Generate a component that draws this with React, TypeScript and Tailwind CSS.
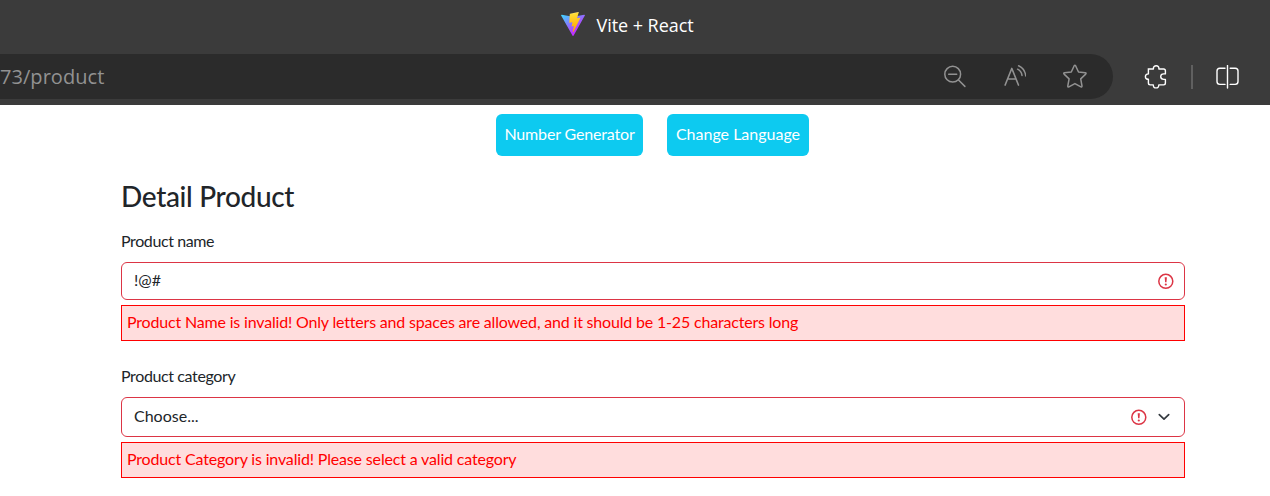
import type { ReactNode } from "react";

function ViteLogo() {
  return (
    <svg className="h-6 w-6" viewBox="0 0 256 257" aria-hidden="true">
      <defs>
        <linearGradient id="shield" x1="-.8%" x2="57.6%" y1="7.7%" y2="78.4%">
          <stop offset="0%" stopColor="#41D1FF" />
          <stop offset="100%" stopColor="#BD34FE" />
        </linearGradient>
        <linearGradient id="bolt" x1="43.4%" x2="50.3%" y1="2.2%" y2="89%">
          <stop offset="0%" stopColor="#FFEA83" />
          <stop offset="8.3%" stopColor="#FFDD35" />
          <stop offset="100%" stopColor="#FFA800" />
        </linearGradient>
      </defs>
      <path fill="url(#shield)" d="M255.153 37.938L134.897 252.976c-2.483 4.44-8.862 4.466-11.382.048L.875 37.958c-2.746-4.814 1.371-10.646 6.827-9.67l120.385 21.517a6.537 6.537 0 0 0 2.322-.004l117.867-21.483c5.438-.991 9.574 4.796 6.877 9.62Z" />
      <path fill="url(#bolt)" d="M185.432.063L96.44 17.501a3.268 3.268 0 0 0-2.634 3.014l-5.474 92.456a3.268 3.268 0 0 0 3.997 3.378l24.777-5.718c2.318-.535 4.413 1.507 3.936 3.838l-7.361 36.047c-.495 2.426 1.782 4.5 4.151 3.78l15.304-4.649c2.372-.72 4.652 1.36 4.15 3.788l-11.698 56.621c-.732 3.542 3.979 5.473 5.943 2.437l1.313-2.028l72.516-144.72c1.215-2.423-.88-5.186-3.54-4.672l-25.505 4.922c-2.396.462-4.435-1.77-3.759-4.114l16.646-57.705c.677-2.35-1.37-4.583-3.769-4.113Z" />
    </svg>
  );
}

function ErrorIcon() {
  return (
    <svg className="h-[17px] w-[17px]" viewBox="0 0 17 17" fill="none" stroke="#dc3545" aria-hidden="true">
      <circle cx="8.8" cy="8.3" r="7" strokeWidth="1.5" />
      <path d="M7.7 4.2h2.2l-.4 5.1H8.1z" fill="#dc3545" stroke="none" />
      <circle cx="8.8" cy="11.5" r="1.1" fill="#dc3545" stroke="none" />
    </svg>
  );
}

function BrowserChrome() {
  return (
    <header className="h-[105px] bg-[#3b3b3b]">
      <div className="flex h-[54px] items-center pb-[6px] pl-[560.5px]">
        <ViteLogo />
        <span className="ml-3 whitespace-nowrap pt-[2px] font-['Open_Sans',sans-serif] text-[18px] leading-6 tracking-[-0.05px] text-white">Vite + React</span>
      </div>
      <div className="flex h-[45px] items-center">
        <div className="flex h-[45px] w-[1113px] items-center rounded-r-full bg-[#2b2b2b] text-[#929292]">
          <span className="flex-1 font-['Open_Sans',sans-serif] text-[20px] leading-6 tracking-[0.05px]">73/product</span>
          <svg className="h-6 w-6" viewBox="0 0 24 24" fill="none" stroke="currentColor" strokeWidth="1.5" strokeLinecap="round" aria-hidden="true">
            <circle cx="10.7" cy="9.2" r="7.9" />
            <path d="M16.5 15l6.4 6.4M6.7 9.2h8" />
          </svg>
          <svg className="ml-9 h-6 w-6" viewBox="0 0 24 24" fill="none" stroke="currentColor" strokeWidth="1.5" strokeLinecap="round" strokeLinejoin="round" aria-hidden="true">
            <path d="M3.1 20.1L9.8 3.4l6.7 16.7M5.6 13.9H14M15.6 4.2c2.6 1.3 4 3.3 4.4 6.2M16.6.8c4.2 1.8 6.6 5.2 7.2 10.2" />
          </svg>
          <svg className="ml-[35px] mr-[26px] h-[25px] w-[26px]" viewBox="0 0 26 25" fill="none" stroke="currentColor" strokeWidth="1.5" strokeLinejoin="round" aria-hidden="true">
            <path d="M13.2 1.7q.7-1.1 1.4 0l2.9 6.3 6.8.8q1.3.3.4 1.3l-5 4.8 1.3 7.1q0 1.3-1.1.9l-6-3.3-6 3.3q-1.2.4-1.1-.9l1.3-7.1-5-4.8q-.9-1 .4-1.3l6.8-.8z" />
          </svg>
        </div>
        <svg className="ml-[31px] h-6 w-6" viewBox="0 0 24 24" fill="none" stroke="#fff" strokeWidth="1.4" strokeLinejoin="round" aria-hidden="true">
          <path d="M4.2 4H9.4C9.2 1.9 10.6.7 12.2.7s2.9 1.2 2.7 3.3h4.7q1.8 0 1.8 1.8v3.1h-1.6c-1.8 0-3.1 1.1-3.1 2.7s1.3 2.8 3.1 2.8h1.6v3.7q0 1.8-1.8 1.8h-4.8c.1 2-1 3-2.8 3s-2.8-1-2.7-3H6.2q-1.8 0-1.8-1.8v-3.8c-1.9.1-3-1-3-2.6s1.1-2.8 3-2.8V4z" />
        </svg>
        <div className="ml-[23px] h-6 w-[1.5px] bg-[#606060]" />
        <svg className="ml-[23.5px] h-6 w-6" viewBox="0 0 24 24" fill="none" stroke="#fff" strokeWidth="1.4" strokeLinecap="round" aria-hidden="true">
          <path d="M11.5.5v22.6M9 3.2H3.8Q1 3.2 1 6v10.6q0 2.8 2.8 2.8H9M14.2 3.2h5q2.8 0 2.8 2.8v10.6q0 2.8-2.8 2.8h-5" />
        </svg>
      </div>
    </header>
  );
}

function FieldError({ children }: { children: ReactNode }) {
  return <div className="mt-[5px] flex h-9 items-center border border-[#f00] bg-[#fdd] pb-[2px] pl-[5px] text-[#f00]">{children}</div>;
}

export default function App() {
  return (
    <div className="h-[496px] overflow-hidden bg-white font-[Lato,sans-serif] text-base leading-6 text-[#212529]">
      <BrowserChrome />
      <nav className="flex gap-6 pl-[496px] pt-[9px] text-white">
        <button className="h-[42px] w-[147px] whitespace-nowrap rounded-md bg-[#0dcaf0] pb-[2px] tracking-[-0.16px]">Number Generator</button>
        <button className="h-[42px] w-[142px] whitespace-nowrap rounded-md bg-[#0dcaf0] pb-[2px]">Change Language</button>
      </nav>
      <main className="ml-[121px] w-[1064px]">
        <h1 className="flex h-[73px] items-center pt-[6px] text-[28px] font-medium tracking-[-0.33px]">Detail Product</h1>
        <section>
          <div className="flex h-[33px] items-start"><label className="tracking-[-0.4px]" htmlFor="product-name">Product name</label></div>
          <div className="flex h-[38px] items-center justify-between rounded-md border border-[#dc3545] pl-3 pr-[10px]">
            <span className="pb-[2px]" id="product-name">!@#</span>
            <ErrorIcon />
          </div>
          <FieldError><span className="tracking-[-0.18px]">Product Name is invalid! Only letters and spaces are allowed, and it should be 1-25 characters long</span></FieldError>
        </section>
        <section className="mt-[23px]">
          <div className="flex h-[33px] items-start"><label className="tracking-[-0.38px]" htmlFor="product-category">Product category</label></div>
          <div className="flex h-10 items-center rounded-md border border-[#dc3545] pl-3 pr-[13px]">
            <span id="product-category" className="flex-1 pb-[2px]">Choose...</span>
            <ErrorIcon />
            <svg className="ml-[10px] h-[14px] w-[14px]" viewBox="0 0 14 14" fill="none" stroke="#343a40" strokeWidth="1.7" strokeLinecap="round" strokeLinejoin="round" aria-hidden="true">
              <path d="M2.3 4.7L7 9.2l4.7-4.5" />
            </svg>
          </div>
          <FieldError><span className="tracking-[-0.165px]">Product Category is invalid! Please select a valid category</span></FieldError>
        </section>
      </main>
    </div>
  );
}
